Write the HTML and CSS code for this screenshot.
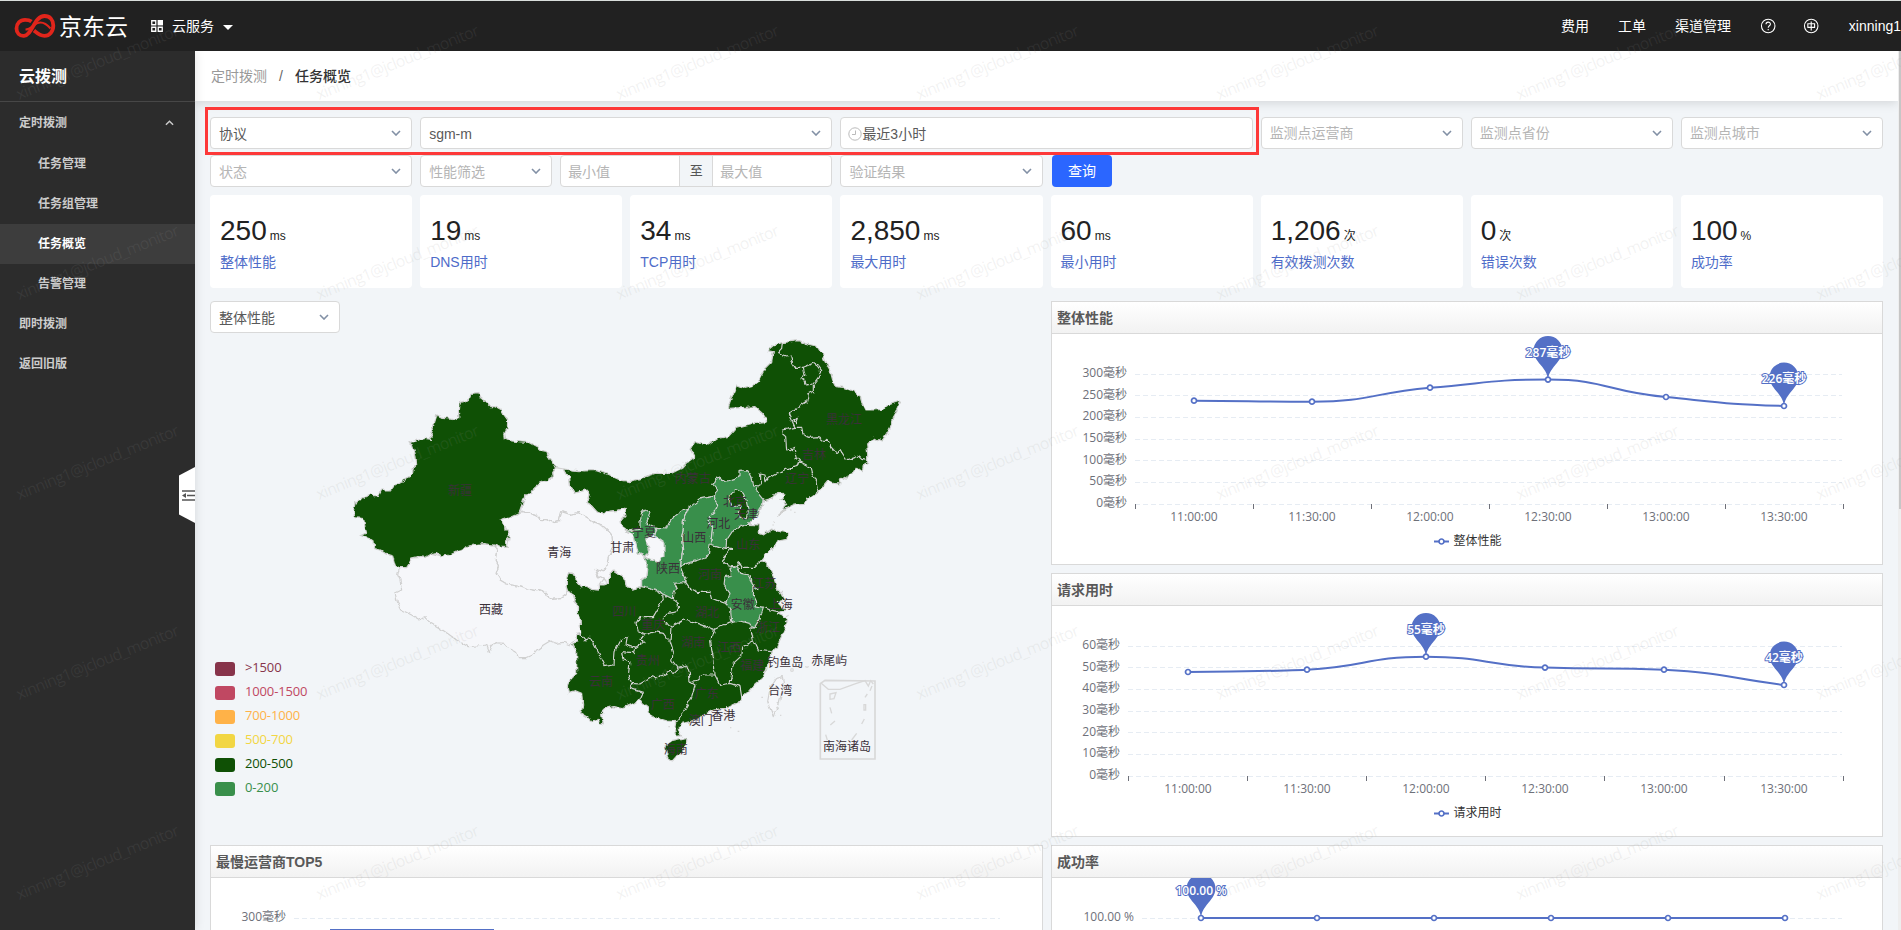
FILE: index.html
```html
<!DOCTYPE html>
<html lang="zh-CN">
<head>
<meta charset="utf-8">
<title>云拨测 - 任务概览</title>
<link rel="stylesheet" href="styles.css">
</head>
<body>
<svg class="defs" width="0" height="0">
  <defs>
    <symbol id="chev" viewBox="0 0 10 6"><path d="M1 1l4 4 4-4" fill="none" stroke="currentColor" stroke-width="1.6"/></symbol>
    <g id="dot"><circle r="2.5" fill="#fff" stroke="#5470c6" stroke-width="1.7"/></g>
    <path id="pin" d="M0 0C-.8-6-3-9-6-13C-10-18-14.400-22-14.400-29A14.400 14.400 0 0 1 14.400-29C14.400-22 10-18 6-13C3-9 .8-6 0 0Z" fill="#5470c6"/>
    <filter id="coast" x="-5%" y="-5%" width="110%" height="110%" color-interpolation-filters="sRGB">
      <feTurbulence type="fractalNoise" baseFrequency="0.16" numOctaves="2" seed="4" result="n"/>
      <feDisplacementMap in="SourceGraphic" in2="n" scale="5" xChannelSelector="R" yChannelSelector="G"/>
    </filter>
  </defs>
</svg>

<header class="topbar">
  <svg class="logo" width="42" height="26" viewBox="0 0 42 26" fill="none" stroke="#e1251b" stroke-width="3.800">
    <path d="M17.500 8.500C15.500 7 13.500 6.800 11 6.800C6 6.800 2.500 10.500 2.500 15.500C2.500 20 5.500 23.200 10 22.800C18.500 22 20 3 30.500 3C36 3 39.300 7 39.300 12.500C39.300 18.500 35.500 22.800 30.500 22.800C25 22.800 22.500 19.500 20 17.500"/>
    <path d="M11.500 16.500C17.500 16.500 20 9.500 26.500 9.500C30.500 9.500 33.500 12 36.500 15.500" stroke-width="2"/>
  </svg>
  <span class="brand">京东云</span>
  <svg class="apps" width="12" height="12" viewBox="0 0 12 12"><path d="M.75.75h4v4h-4zM.75 7.250h4v4h-4zM7.250 7.250h4v4h-4z" fill="none" stroke="#fff" stroke-width="1.300"/><path d="M6.600 0H12v5.400H6.600z" fill="#fff"/></svg>
  <span class="svc">云服务</span>
  <svg class="caret" width="10" height="5" viewBox="0 0 10 5"><path d="M0 0h10L5 5z" fill="#fff"/></svg>
  <nav class="topnav">
    <span class="n1">费用</span><span class="n2">工单</span><span class="n3">渠道管理</span>
    <svg class="n4" width="18" height="18" viewBox="0 0 18 18" fill="none" stroke="#fff" stroke-width="1.200"><circle cx="9" cy="9" r="7.400"/><path d="M6.600 7.200C6.600 4 11.400 4 11.400 7C11.400 8.800 9 8.800 9 11M9 12.200v1.400"/></svg>
    <svg class="n5" width="18" height="18" viewBox="0 0 18 18" fill="none" stroke="#fff" stroke-width="1.200"><circle cx="9" cy="9" r="7.400"/><path d="M5.300 6.500h7.400v4H5.300zM9 4v10"/></svg>
    <span class="n6">xinning1</span>
  </nav>
</header>

<div class="shell">
  <aside class="side">
    <h1 class="side-title">云拨测</h1>
    <div class="item group"><span>定时拨测</span><svg class="up" width="9" height="6"><use href="#chev"/></svg></div>
    <div class="item sub">任务管理</div>
    <div class="item sub">任务组管理</div>
    <div class="item sub active">任务概览</div>
    <div class="item sub">告警管理</div>
    <div class="item">即时拨测</div>
    <div class="item">返回旧版</div>
    <svg class="fold" width="16" height="56" viewBox="0 0 16 56"><path d="M0 8.500L16 0v56L0 47.500z" fill="#fff"/><path d="M3 24h13M8 28.500h8M3 33h13" stroke="#555" stroke-width="1.300"/><path d="M3 28.500l4-2.500v5z" fill="#555"/></svg>
  </aside>

  <main class="main">
    <div class="crumbs"><span class="c1">定时拨测</span><span class="c2">/</span><span class="c3">任务概览</span></div>
    <div class="content">
      <div class="filters">
        <div class="field dark">协议<svg class="chev"><use href="#chev"/></svg></div>
        <div class="field dark w2">sgm-m<svg class="chev"><use href="#chev"/></svg></div>
        <div class="field dark w2 date"><svg class="clock" width="14" height="14" viewBox="0 0 14 14" fill="none" stroke="#bbb"><circle cx="7" cy="7" r="6.200"/><path d="M7.500 3.500V7.500H4"/></svg>最近3小时</div>
        <div class="field">监测点运营商<svg class="chev"><use href="#chev"/></svg></div>
        <div class="field">监测点省份<svg class="chev"><use href="#chev"/></svg></div>
        <div class="field">监测点城市<svg class="chev"><use href="#chev"/></svg></div>
        <div class="mark"></div>
      </div>
      <div class="filters second">
        <div class="field">状态<svg class="chev"><use href="#chev"/></svg></div>
        <div class="pair w2">
          <div class="field perf">性能筛选<svg class="chev"><use href="#chev"/></svg></div>
          <div class="range"><span class="lo">最小值</span><span class="to">至</span><span class="hi">最大值</span></div>
        </div>
        <div class="field">验证结果<svg class="chev"><use href="#chev"/></svg></div>
        <button class="query">查询</button>
      </div>

      <div class="stats">
        <div class="stat"><p class="num">250<small>ms</small></p><p class="lab">整体性能</p></div>
        <div class="stat"><p class="num">19<small>ms</small></p><p class="lab">DNS用时</p></div>
        <div class="stat"><p class="num">34<small>ms</small></p><p class="lab">TCP用时</p></div>
        <div class="stat"><p class="num">2,850<small>ms</small></p><p class="lab">最大用时</p></div>
        <div class="stat"><p class="num">60<small>ms</small></p><p class="lab">最小用时</p></div>
        <div class="stat"><p class="num">1,206<small>次</small></p><p class="lab">有效拨测次数</p></div>
        <div class="stat"><p class="num">0<small>次</small></p><p class="lab">错误次数</p></div>
        <div class="stat"><p class="num">100<small>%</small></p><p class="lab">成功率</p></div>
      </div>

      <div class="board">
        <section class="col">
          <div class="mapbox">
            <div class="field dark metric">整体性能<svg class="chev"><use href="#chev"/></svg></div>
            <svg class="map" width="833" height="504" viewBox="210 333 833 504">
              <g filter="url(#coast)">
              <g transform="translate(340 330) scale(.33333)" class="land">
                <!-- dark provinces, one silhouette -->
                <path class="d" d="M672 417L695 420 730 423 770 421 800 432 840 450 870 455 900 445 945 430 995 430 1025 415 1040 398 1065 380 1053 355 1065 335 1085 342 1105 345 1135 325 1165 320 1190 292 1230 282 1275 278 1280 270 1265 248 1245 230 1210 233 1165 235 1170 215 1190 165 1215 175 1235 170 1255 155 1265 135 1275 115 1295 95 1300 65 1285 62 1305 45 1325 38 1350 35 1375 32 1400 42 1430 48 1448 75 1455 95 1470 120 1478 150 1488 170 1510 172 1540 182 1562 200 1565 220 1575 240 1600 240 1625 238 1645 225 1680 213 1670 235 1672 245 1660 265 1650 295 1628 333 1600 325 1580 345 1583 370 1583 400 1570 407 1567 425 1550 412 1540 430 1525 435 1510 445 1498 450 1500 462 1480 460 1465 452 1450 470 1435 485 1400 510 1390 520 1365 522 1340 535 1313 555 1330 540 1340 520 1322 510 1335 495 1330 487 1310 488 1295 505 1272 512 1265 530 1260 545 1250 560 1235 570 1225 583 1255 585 1255 610 1270 615 1295 597 1310 603 1350 610 1340 625 1315 630 1300 655 1280 670 1265 690 1285 710 1300 740 1310 770 1325 795 1333 810 1315 815 1320 825 1335 840 1315 848 1330 855 1340 865 1335 895 1322 925 1310 952 1292 968 1290 990 1280 1015 1270 1040 1245 1062 1225 1085 1205 1102 1190 1120 1160 1135 1135 1137 1110 1145 1080 1160 1050 1175 1030 1180 1015 1190 1015 1202 1025 1218 1010 1218 1005 1190 1008 1175 980 1173 950 1165 925 1150 922 1130 895 1110 875 1122 845 1135 820 1130 800 1135 785 1150 790 1185 778 1182 775 1168 755 1175 740 1160 722 1150 728 1125 725 1090 705 1082 685 1088 682 1070 690 1050 710 1030 710 965 698 940 712 935 712 915 720 912 720 870 712 850 713 820 700 800 682 782 678 768 680 745 685 728 700 732 712 755 725 770 740 768 755 778 778 780 778 765 795 765 808 760 808 735 820 723 838 735 855 745 858 765 875 777 903 770 905 750 918 740 922 700 915 680 895 670 888 640 880 610 860 603 845 592 840 575 857 555 855 535 830 542 800 545 790 555 770 545 752 525 740 517 748 505 750 490 740 480 703 490 688 465 685 440Z"/>
                <path class="w" d="M646 413L672 417 685 440 688 465 703 490 740 480 750 490 748 505 740 517 752 525 770 545 790 555 800 545 830 542 855 535 857 555 840 575 845 592 860 603 880 610 888 640 895 670 915 680 922 700 918 740 905 750 903 770 875 777 858 765 855 745 838 735 820 723 808 735 808 760 790 748 775 740 765 718 790 725 800 710 805 680 820 650 815 615 800 598 785 585 760 575 740 562 715 548 690 553 665 545 658 575 640 578 625 570 600 568 590 557 570 550 545 545 548 520 555 495 575 490 582 475 600 460 625 450 640 440 638 425Z"/>
                <path class="w" d="M538 548L545 545 570 550 590 557 600 568 625 570 640 578 658 575 665 545 690 553 715 548 740 562 760 575 785 585 800 598 815 615 820 650 805 680 800 710 790 725 765 718 775 740 790 748 778 765 778 780 755 778 740 768 725 770 712 755 700 730 685 727 680 745 678 770 682 783 675 795 660 806 640 808 620 795 605 780 590 783 560 777 530 768 500 762 480 750 468 730 475 710 465 690 470 660 462 645 502 652 508 620 490 585 480 569Z"/>
                <path class="w" d="M178 713L215 684 255 682 275 670 305 678 350 665 378 650 430 641 462 645 470 660 465 690 475 710 468 730 480 750 500 762 530 768 560 777 590 783 605 780 620 795 640 808 660 806 675 795 682 783 695 790 700 805 712 820 712 850 720 870 722 910 710 912 712 925 695 935 690 945 670 937 650 940 630 933 610 945 590 960 578 975 560 983 535 983 528 965 500 952 490 940 465 938 455 950 448 968 440 945 410 948 385 950 350 930 325 912 300 895 275 880 255 860 240 870 215 855 185 840 172 815 165 790 185 780 180 750 173 735Z"/>
                <path class="d" d="M392 190L417 188 421 203 436 215 450 230 468 230 484 239 492 255 503 270 502 295 494 310 496 325 515 333 545 336 565 337 590 350 603 361 620 364 628 385 640 402 646 413 638 425 640 440 625 450 600 460 582 475 575 490 555 495 548 520 538 548 510 560 480 569 490 585 492 600 506 600 508 620 495 635 502 652 480 652 462 645 430 641 400 645 378 650 368 660 350 665 330 675 305 678 290 668 275 670 255 682 235 680 215 684 208 700 200 713 178 713 165 705 158 678 138 672 122 660 104 656 102 635 85 625 63 617 80 610 75 590 70 566 45 563 40 540 47 515 70 503 90 493 97 500 115 500 125 480 145 480 165 468 195 450 213 442 217 415 230 402 228 380 222 360 217 345 207 338 230 332 255 325 275 328 270 315 280 290 290 257 305 265 325 266 345 270 360 262 358 240 360 218 378 213 390 205Z"/>
                <!-- light provinces -->
                <path class="l" d="M860 603L900 598 900 575 905 550 915 537 930 545 925 565 918 580 935 588 950 595 945 615 918 625 922 645 928 660 922 682 895 670 888 640 880 610Z"/>
                <path class="l" d="M950 595L980 597 988 575 1000 560 1025 540 1045 535 1030 570 1030 600 1025 620 1028 660 1022 705 1038 758 1002 760 1015 775 1002 785 1000 808 975 795 945 780 905 770 905 750 918 740 922 700 915 682 925 660 920 625 945 615Z"/>
                <path class="l" d="M1045 535L1070 515 1075 505 1100 500 1120 495 1122 510 1133 525 1125 545 1112 555 1108 575 1118 590 1115 620 1110 645 1105 678 1075 690 1050 697 1022 707 1028 660 1025 620 1030 600 1030 570Z"/>
                <path class="l" d="M1120 495L1130 480 1118 465 1125 450 1140 440 1145 455 1165 452 1200 440 1200 425 1220 422 1230 435 1238 465 1255 468 1250 485 1272 512 1265 530 1255 545 1240 565 1225 583 1200 590 1180 600 1160 630 1158 655 1135 650 1112 642 1118 590 1108 575 1112 555 1125 545 1133 525 1122 510Z"/>
                <path class="d" d="M1165 510L1175 490 1190 480 1210 490 1218 510 1222 528 1225 545 1222 565 1200 565 1195 545 1202 528 1175 530Z"/>
                <path class="l" d="M1175 735L1170 715 1190 708 1203 730 1225 735 1230 750 1242 770 1240 795 1250 815 1245 830 1270 835 1260 865 1245 890 1225 880 1200 873 1175 878 1172 840 1160 820 1170 790 1152 765 1155 740Z"/>
                <path class="w" d="M918 622L945 618 975 640 975 680 960 685 955 697 930 690 915 680 928 660 922 645Z"/>
                <!-- inner borders, north -->
                <g class="b" transform="translate(900 0)">
                  <path d="M427 38L425 55 413 68 440 78 452 75 455 95 465 112 490 112 520 100 532 108 542 122 535 145 520 165 520 185 505 192 500 215 480 228 445 250 455 270 465 292 485 292 490 315 510 322 535 320 545 330 565 332 572 350 588 368 600 358 620 390 635 385 655 378 665 388 683 392M490 112L495 135 483 145 495 152 500 165 520 162M465 292L430 300 428 312 437 320 440 360 450 362 465 355 472 385 480 395 510 410 515 430 528 455 533 485M480 395L475 408 445 415 420 425 385 445 378 455 375 435 362 432 362 455 355 468M258 655L275 655 245 690 260 705 285 712 295 695 305 712 345 712 365 690M122 707L138 745 138 758M462 270L475 265 470 278Z"/>
                </g>
                <!-- inner borders, south -->
                <g class="b" transform="translate(600 690)">
                  <path d="M438 68L450 85 475 97 510 97 515 115 540 125 562 130M668 140L690 150 715 155M645 200L632 205 640 240 655 270 690 275M640 243L605 262 602 290 580 310 570 370 600 380 605 410M575 188L550 195 520 210 512 240 515 270 522 300 525 345 540 375 570 370M525 345L490 345 475 360 450 365M520 210L500 200 460 185 430 180 393 200 390 245 400 275 395 300 415 325 440 318 448 340 450 365 465 375 455 410 440 440 425 465 405 490M400 118L415 130 415 155 380 160 370 175 385 195 393 200M368 103L370 118 340 170 300 170 288 190 295 215 315 225 345 215 370 220 385 240M120 222L135 240 150 232 170 270 195 320 222 315 225 275 240 245 262 232 258 255 285 265 312 245 300 235 315 225M285 265L280 278 245 275 248 295 270 305 265 345 275 370 300 372 335 350 350 357 385 335 400 340 415 325M275 370L270 385 310 398 300 420M630 45L640 80 655 90"/>
                </g>
                <g transform="translate(600 690)">
                  <path class="d" d="M375 560L395 545 438 535 435 565 420 580 400 603 382 590Z"/>
                  <path class="w" d="M700 470L690 445 683 425 690 385 710 355 730 350 733 365 722 410 715 440 705 455Z"/>
                </g>
              </g>
              </g>
              <g transform="translate(340 330) scale(.33333)">
                <g transform="translate(600 690)" class="isle">
                  <path d="M841 371L855 361 1005 363V597H841Z" stroke-width="5"/>
                  <path d="M842 368L865 388 900 388 945 372 975 362 985 378 992 362 1000 372M870 402l18-4-6 18-12 2zM870 442l5 18M972 434h5v16h-5zM871 495l14-12M975 412l7-10M965 492l8-15M857 524l5 16M935 540l15-20M996 378l-6 14" stroke-width="4"/>
                  <path d="M664 412h5M720 466h4M570 503h4M593 514h5M738 170l8-4M735 185l10-3M752 330a4 4 0 1 0 8 0a4 4 0 1 0-8 0M797 318a4 4 0 1 0 8 0M385 500h5" stroke-width="3.500"/>
                </g>
                <path class="isle" stroke-width="3" d="M1350 540h5M1362 547h5M1300 575l5 3M1297 585h5"/>
                <g class="names">
                  <text x="360" y="496">新疆</text><text x="453" y="853">西藏</text><text x="658" y="681">青海</text><text x="847" y="667">甘肃</text><text x="912" y="621">宁夏</text><text x="984" y="729">陕西</text><text x="1058" y="460">内蒙古</text><text x="1185" y="528">北京</text><text x="1218" y="566">天津</text><text x="1135" y="595">河北</text><text x="1063" y="635">山西</text><text x="1225" y="656">山东</text><text x="1110" y="746">河南</text><text x="1512" y="283">黑龙江</text><text x="1422" y="386">吉林</text><text x="1372" y="458">辽宁</text>
                  <text x="853" y="858">四川</text><text x="940" y="898">重庆</text><text x="923" y="1006">贵州</text><text x="1273" y="773">江苏</text><text x="1208" y="838">安徽</text><text x="1322" y="838">上海</text><text x="1285" y="905">浙江</text><text x="1102" y="860">湖北</text><text x="1060" y="950">湖南</text><text x="1168" y="965">江西</text><text x="1237" y="1021">福建</text><text x="783" y="1068">云南</text><text x="968" y="1136">广西</text><text x="1100" y="1103">广东</text><text x="1082" y="1186">澳门</text><text x="1150" y="1170">香港</text><text x="1007" y="1271">海南</text><text x="1321" y="1095">台湾</text><text x="1336" y="1011">钓鱼岛</text><text x="1468" y="1005">赤尾屿</text><text x="1521" y="1263">南海诸岛</text>
                </g>
              </g>
            </svg>
            <ul class="legend">
              <li class="k1">&gt;1500</li><li class="k2">1000-1500</li><li class="k3">700-1000</li><li class="k4">500-700</li><li class="k5">200-500</li><li class="k6">0-200</li>
            </ul>
          </div>
          <article class="panel">
            <h2>最慢运营商TOP5</h2>
            <svg class="chart" width="831" height="230" viewBox="211 878 831 230">
              <path class="grid" d="M294 918.500H1000"/>
              <text class="ax e" x="286" y="921">300毫秒</text>
              <path d="M330 929h164v179h-164z" fill="#5470c6"/>
            </svg>
          </article>
        </section>

        <section class="col">
          <article class="panel">
            <h2>整体性能</h2>
            <svg class="chart" width="830" height="230" viewBox="1052 334 830 230">
              <path class="grid" d="M1135 374.500H1842M1135 395.500H1842M1135 417.500H1842M1135 439.500H1842M1135 460.500H1842M1135 482.500H1842M1135 504.500H1842"/>
              <path class="tick" d="M1135.500 504v5M1253.500 504v5M1371.500 504v5M1489.500 504v5M1607.500 504v5M1725.500 504v5M1843.500 504v5"/>
              <g class="ax e"><text x="1127" y="377">300毫秒</text><text x="1127" y="399">250毫秒</text><text x="1127" y="420">200毫秒</text><text x="1127" y="442">150毫秒</text><text x="1127" y="464">100毫秒</text><text x="1127" y="485">50毫秒</text><text x="1127" y="507">0毫秒</text></g>
              <g class="ax m"><text x="1194" y="521">11:00:00</text><text x="1312" y="521">11:30:00</text><text x="1430" y="521">12:00:00</text><text x="1548" y="521">12:30:00</text><text x="1666" y="521">13:00:00</text><text x="1784" y="521">13:30:00</text></g>
              <path class="line" d="M1194 400.700C1253 401 1253 401.700 1312 401.700C1371 401.700 1371 393 1430 387.700C1489 383 1489 379.600 1548 379.600C1607 379.600 1607 392 1666 397C1725 403 1725 404 1784 406"/>
              <use href="#pin" x="1548" y="379.500"/><use href="#pin" x="1784" y="406"/>
              <use href="#dot" x="1194" y="400.700"/><use href="#dot" x="1312" y="401.700"/><use href="#dot" x="1430" y="387.700"/><use href="#dot" x="1548" y="379.600"/><use href="#dot" x="1666" y="397"/><use href="#dot" x="1784" y="406"/>
              <text class="tag" x="1548" y="357">287毫秒</text><text class="tag" x="1784" y="383">226毫秒</text>
              <path class="line" d="M1434 541.500h15"/><use href="#dot" x="1441.500" y="541.500"/><text class="lg" x="1453.500" y="545">整体性能</text>
            </svg>
          </article>
          <article class="panel">
            <h2>请求用时</h2>
            <svg class="chart" width="830" height="230" viewBox="1052 606 830 230">
              <path class="grid" d="M1128 646.500H1842M1128 667.500H1842M1128 689.500H1842M1128 711.500H1842M1128 732.500H1842M1128 754.500H1842M1128 776.500H1842"/>
              <path class="tick" d="M1128.500 776v5M1247.500 776v5M1366.500 776v5M1485.500 776v5M1604.500 776v5M1724.500 776v5M1843.500 776v5"/>
              <g class="ax e"><text x="1120" y="649">60毫秒</text><text x="1120" y="671">50毫秒</text><text x="1120" y="692">40毫秒</text><text x="1120" y="714">30毫秒</text><text x="1120" y="736">20毫秒</text><text x="1120" y="757">10毫秒</text><text x="1120" y="779">0毫秒</text></g>
              <g class="ax m"><text x="1188" y="793">11:00:00</text><text x="1307" y="793">11:30:00</text><text x="1426" y="793">12:00:00</text><text x="1545" y="793">12:30:00</text><text x="1664" y="793">13:00:00</text><text x="1784" y="793">13:30:00</text></g>
              <path class="line" d="M1188 672C1247 672 1247 671.700 1307 669.700C1366 667 1366 656.700 1426 656.700C1485 656.700 1485 666 1545 667.600C1604 669.500 1604 667.500 1664 669.700C1724 673 1724 677 1784 685"/>
              <use href="#pin" x="1426" y="656.500"/><use href="#pin" x="1784" y="685"/>
              <use href="#dot" x="1188" y="672"/><use href="#dot" x="1307" y="669.700"/><use href="#dot" x="1426" y="656.700"/><use href="#dot" x="1545" y="667.600"/><use href="#dot" x="1664" y="669.700"/><use href="#dot" x="1784" y="685"/>
              <text class="tag" x="1426" y="634">55毫秒</text><text class="tag" x="1784" y="662">42毫秒</text>
              <path class="line" d="M1434 813.500h15"/><use href="#dot" x="1441.500" y="813.500"/><text class="lg" x="1453.500" y="817">请求用时</text>
            </svg>
          </article>
          <article class="panel">
            <h2>成功率</h2>
            <svg class="chart" width="830" height="230" viewBox="1052 878 830 230">
              <path class="grid" d="M1142 918.500H1842"/>
              <text class="ax e" x="1134" y="921">100.00 %</text>
              <path class="line" d="M1201 918H1785"/>
              <use href="#pin" x="1201" y="917.500"/>
              <use href="#dot" x="1201" y="918"/><use href="#dot" x="1317" y="918"/><use href="#dot" x="1434" y="918"/><use href="#dot" x="1551" y="918"/><use href="#dot" x="1668" y="918"/><use href="#dot" x="1785" y="918"/>
              <text class="tag" x="1201" y="895">100.00 %</text>
            </svg>
          </article>
        </section>
      </div>
    </div>
  </main>
  <div class="scroll"><div class="thumb"></div></div>
</div>
<svg class="wm" id="wm" width="1901" height="930" aria-hidden="true"></svg>
<script src="watermark.js"></script>
</body>
</html>
```
FILE: styles.css
```css
* { box-sizing: border-box; }
html, body { margin: 0; height: 930px; overflow: hidden; }
body {
  font: 14px/20px "Liberation Sans", "Noto Sans CJK SC", sans-serif;
  color: #333;
  background: #f2f5f8;
  display: flex;
  flex-direction: column;
  position: relative;
}
.defs { position: absolute; }
h1, h2, p, ul { margin: 0; padding: 0; }

.topbar {
  flex: none;
  height: 51px;
  border-top: 1px solid #d9dedb;
  background: #212121;
  color: #fff;
  display: flex;
  align-items: center;
  padding-left: 14px;
  white-space: nowrap;
  overflow: hidden;
}
.brand { font-size: 23px; line-height: 28px; margin: 2px 0 0 3px; width: 70px; }
.apps { margin-left: 22px; }
.svc { margin-left: 9px; width: 42px; }
.caret { margin-left: 9px; margin-top: 2px; }
.topnav { margin-left: auto; width: 340px; flex: none; display: flex; align-items: center; }
.n2, .n3 { margin-left: 29px; }
.n4 { margin-left: 28px; }
.n5 { margin-left: 27px; }
.n4, .n5 { position: relative; left: 1px; }
.n6 { margin-left: 30px; }

.shell { flex: 1; min-height: 0; display: flex; overflow: hidden; }
.side {
  flex: none;
  width: 195px;
  background: #2c2c2c;
  color: #ccc;
  position: relative;
  z-index: 2;
  box-shadow: 0 0 10px rgba(0, 0, 0, .12);
}
.side-title {
  height: 51px;
  padding: 16px 19px 0;
  font-size: 16px;
  line-height: 20px;
  font-weight: bold;
  color: #fff;
  border-bottom: 1px solid #474747;
}
.item { height: 40px; padding: 0 19px; line-height: 40px; font-size: 12px; font-weight: bold; }
.item.group { height: 41px; margin-bottom: 1px; display: flex; justify-content: space-between; align-items: center; padding-right: 21px; }
.item.sub { padding-left: 38px; }
.item.active { background: #3d3d3d; color: #fff; }
.up { transform: rotate(180deg); }
.fold { position: absolute; right: 0; top: 416px; }

.main { flex: 1; min-width: 0; }
.crumbs {
  height: 50px;
  background: #fff;
  display: flex;
  align-items: center;
  padding-left: 16px;
  box-shadow: 0 2px 10px rgba(0, 0, 0, .13);
}
.c1 { color: #999; }
.c2 { margin: 0 12px; color: #666; }
.c3 { color: #333; font-weight: 500; }
.content { padding: 16px 15px 0; width: 1703px; }

.filters { display: grid; grid-template-columns: repeat(8, 1fr); column-gap: 8px; position: relative; height: 32px; width: 1673px; }
.second { margin-top: 6px; }
.w2 { grid-column: span 2; }
.field {
  height: 32px;
  border: 1px solid #d9d9d9;
  border-radius: 4px;
  background: #fff;
  color: #b5b5b5;
  padding: 0 10px 0 8px;
  display: flex;
  align-items: center;
  white-space: nowrap;
  line-height: 20px;
}
.field.dark { color: #595959; padding-top: 2px; }
.second .field { padding-top: 2px; }
.chev { width: 10px; height: 6px; margin-left: auto; color: #8290a5; }
.field.dark .chev, .second .chev { margin-top: -2px; }
.filters .field.date { padding-left: 7px; }
.mark { position: absolute; left: -5px; top: -10px; width: 1054px; height: 48px; border: 3px solid #fd3838; z-index: 1; }
.pair { display: flex; gap: 8px; }
.perf { width: 132px; }
.range { flex: 1; display: flex; height: 32px; border: 1px solid #d9d9d9; border-radius: 4px; background: #fff; color: #b5b5b5; line-height: 33px; }
.lo, .hi { flex: 1; padding-left: 7px; }
.to { width: 34px; text-align: center; background: #f2f5f8; border: solid #d9d9d9; border-width: 0 1px; font-size: 13px; line-height: 29px; color: #555; }
.query { width: 60px; height: 32px; margin-left: 1.5px; border: 0; border-radius: 4px; background: #2b66ff; color: #fff; font: inherit; padding: 0; }

.stats { display: grid; grid-template-columns: repeat(8, 1fr); gap: 8px; width: 1673px; margin-top: 8px; }
.stat { height: 93px; background: #fff; border-radius: 4px; padding: 18px 10px 0; }
.num { font-size: 28px; line-height: 36px; height: 36px; color: #222; white-space: nowrap; }
.num small { font-size: 12px; margin-left: 3px; }
.lab { color: #4e6cc9; line-height: 20px; margin-top: 3px; }

.board { display: grid; grid-template-columns: 833px 832px; gap: 8px; margin-top: 13px; }
.col { display: flex; flex-direction: column; gap: 8px; }
.mapbox { height: 536px; position: relative; }
.metric { width: 130px; }
.map, .chart { display: block; }
.panel { height: 264px; border: 1px solid #d9d9d9; background: #fff; overflow: hidden; }
.panel h2 {
  height: 32px;
  border-bottom: 1px solid #d9d9d9;
  background: linear-gradient(#fff, #f2f2f2);
  font-size: 14px;
  line-height: 33px;
  font-weight: bold;
  color: #595959;
  padding-left: 5px;
}
.legend { position: absolute; left: 5px; top: 354px; list-style: none; font: 13px/18px "Open Sans", "Noto Sans", sans-serif; letter-spacing: -.15px; }
.legend li { height: 24px; display: flex; align-items: center; gap: 10px; }
.legend li::before { content: ""; width: 20px; height: 14px; border-radius: 3px; background: currentColor; margin-top: 3px; }
.k1 { color: #87344a; } .k2 { color: #c04862; } .k3 { color: #ffb248; }
.k4 { color: #f2d643; } .k5 { color: #0f5005; } .k6 { color: #398f4b; }

.land path { stroke: #d0d0d0; stroke-width: 3.5; stroke-linejoin: round; }
.land .d { fill: #0f5005; }
.land .l { fill: #398f4b; }
.land .w { fill: #f6f7fa; }
.land .b path { fill: none; }
.isle, .isle path { fill: none; stroke: #d8d8d8; }
.names { font: 36px "Noto Sans CJK SC", sans-serif; text-anchor: middle; fill: #3a3039; }

.chart text { font: 12px "Open Sans", "Noto Sans CJK SC", sans-serif; }
.ax { fill: #6e7079; }
.e { text-anchor: end; }
.m { text-anchor: middle; }
.chart .lg { fill: #333; }
.grid { stroke: #e6ecf3; stroke-dasharray: 5 3; fill: none; }
.tick { stroke: #6e7079; }
.line { fill: none; stroke: #5470c6; stroke-width: 2; }
.chart .tag { fill: #fff; stroke: #5470c6; stroke-width: 2px; paint-order: stroke; text-anchor: middle; font-weight: 600; }

.scroll { flex: none; width: 3px; background: #eee; }
.thumb { width: 2px; height: 458px; margin-left: 1px; background: #c6c6c6; }
.wm { position: absolute; left: 0; top: 0; z-index: 9; pointer-events: none; }
.wm text { font: 16px "Open Sans", sans-serif; fill: #969696; fill-opacity: .13; }
```
FILE: watermark.js
```js
// Repeats the account watermark on a 300 x 200 grid.
const layer = document.getElementById('wm');
for (let y = 100; y < 930; y += 200) {
  for (let x = 19; x < 1901; x += 300) {
    const t = document.createElementNS('http://www.w3.org/2000/svg', 'text');
    t.setAttribute('transform', `translate(${x} ${y}) rotate(-22)`);
    t.setAttribute('textLength', '174');
    t.textContent = 'xinning1@jcloud_monitor';
    layer.appendChild(t);
  }
}
```
